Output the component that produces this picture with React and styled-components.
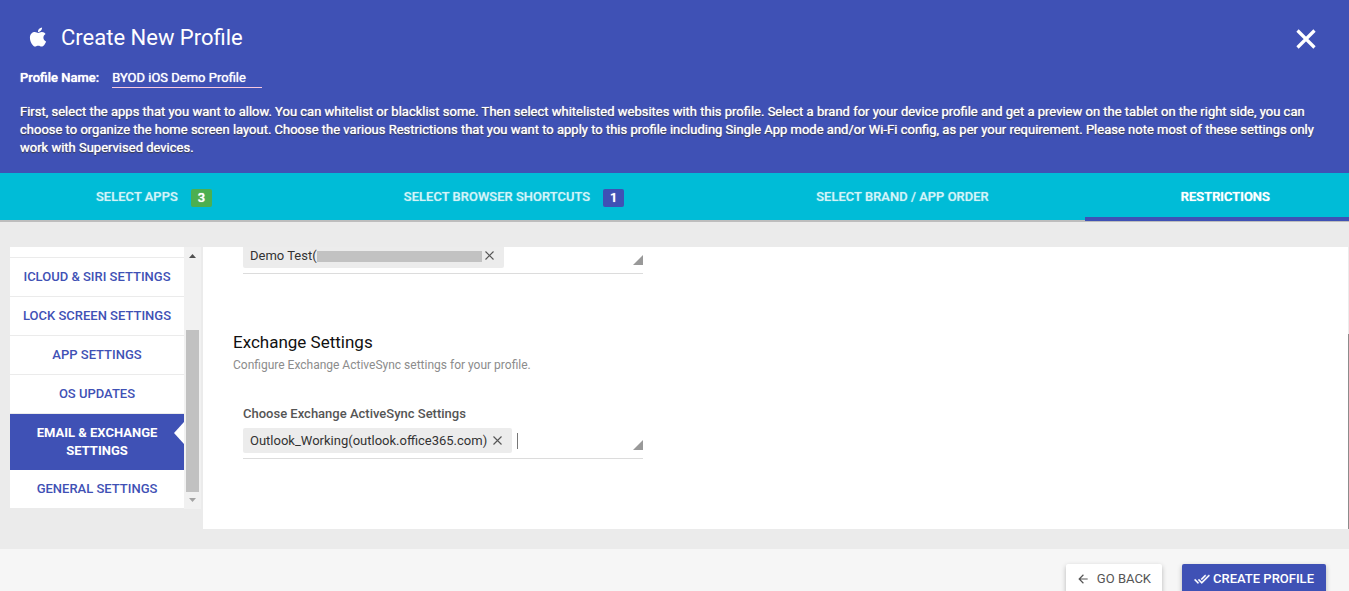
import React from "react";
import styled, { createGlobalStyle, css } from "styled-components";
import { FaApple } from "react-icons/fa";
import { MdArrowBack } from "react-icons/md";

const indigo = "#3f51b5";
const cyan = "#00bcd7";
const panelGrey = "#ebebeb";

const GlobalStyle = createGlobalStyle`
  *, *::before, *::after { box-sizing: border-box; }
  body {
    margin: 0;
    font-family: Roboto, "Liberation Sans", sans-serif;
    font-size: 13px;
    line-height: 18px;
    color: #333;
  }
  button, input { font: inherit; color: inherit; margin: 0; padding: 0; border: 0; background: none; outline: 0; }
  button { cursor: pointer; }
`;

const Page = styled.div`
  height: 100vh;
  overflow: hidden;
  background: #f6f6f6;
`;

const Header = styled.header`
  padding: 20px 20px 16px;
  background: ${indigo};
  color: #fff;
`;

const TitleRow = styled.div`
  display: flex;
  align-items: center;
  height: 36px;
  padding: 0 7px;
`;

const AppleMark = styled(FaApple)`
  width: 22px;
  height: 22px;
  margin-bottom: 2px;
`;

const Title = styled.h1`
  flex: 1;
  margin: 0 0 0 12px;
  font-size: 22px;
  line-height: 32px;
  font-weight: 400;
`;

const CloseButton = styled.button`
  display: flex;
  margin-top: 2px;
`;

const NameRow = styled.div`
  display: flex;
  align-items: center;
  gap: 13px;
  height: 20px;
  margin: 12px 0 15px;
`;

const NameLabel = styled.label`
  font-weight: 500;
  text-shadow: 0 0 1px currentColor;
`;

const NameInput = styled.input`
  width: 150px;
  height: 20px;
  border-bottom: 1px solid #f8c8de;
  font-weight: 400;
  text-shadow: 0 0 1px currentColor;
`;

const Intro = styled.p`
  margin: 0;
  font-weight: 400;
  text-shadow: 0 0 1px currentColor, 0 1px 1px #222;
`;

const Tabs = styled.nav`
  display: flex;
  height: 49px;
  overflow-x: clip;
  background: ${cyan};
  border-bottom: 2px solid #bdbdbd;
`;

const Tab = styled.button`
  position: relative;
  display: flex;
  flex: 1 0 auto;
  align-items: center;
  justify-content: center;
  gap: 13px;
  padding: 0 96px;
  font-weight: 500;
  text-transform: uppercase;
  text-shadow: 0 0 1px currentColor;
  color: ${(p) => (p.$active ? "#fff" : "rgba(255, 255, 255, 0.65)")};
  ${(p) =>
    p.$active &&
    css`
      &::after {
        content: "";
        position: absolute;
        left: 0;
        right: 0;
        bottom: -1px;
        height: 4px;
        background: ${indigo};
      }
    `}
`;

const Badge = styled.span`
  width: 21px;
  height: 18px;
  margin-top: 2px;
  border-radius: 2px;
  background: ${(p) => p.$color};
  color: #fff;
  font-weight: 500;
`;

const Body = styled.main`
  display: flex;
  align-items: flex-start;
  gap: 2px;
  padding: 25px 0 20px 10px;
  background: ${panelGrey};
`;

const Sidebar = styled.aside`
  display: flex;
  flex: none;
  width: 191px;
  height: 262px;
`;

const Menu = styled.ul`
  flex: 1;
  align-self: flex-start;
  margin: 0;
  padding: 10px 0 0;
  list-style: none;
  background: #fff;
`;

const MenuItem = styled.li`
  border-top: ${(p) => (p.$joined ? "0" : `1px solid ${panelGrey}`)};
`;

const MenuLink = styled.a`
  position: relative;
  display: block;
  padding: 10px;
  text-align: center;
  text-decoration: none;
  text-transform: uppercase;
  font-weight: ${(p) => (p.$active ? 700 : 500)};
  color: ${(p) => (p.$active ? "#fff" : indigo)};
  background: ${(p) => (p.$active ? indigo : "#fff")};
  ${(p) =>
    p.$active &&
    css`
      &::after {
        content: "";
        position: absolute;
        top: 8px;
        right: 0;
        border: solid transparent;
        border-width: 11px 10px 11px 0;
        border-right-color: #fff;
      }
    `}
`;

const ScrollTrack = styled.div`
  display: flex;
  flex-direction: column;
  justify-content: space-between;
  align-items: center;
  width: 17px;
  background: #f1f1f1;
`;

const ScrollArrow = styled.svg`
  display: block;
  width: 17px;
  height: 17px;
  fill: ${(p) => p.$color};
`;

const ScrollThumb = styled.div`
  width: 13px;
  height: 162px;
  margin-top: auto;
  background: #c1c1c1;
`;

const Pane = styled.section`
  display: flex;
  flex: 1;
  flex-direction: column;
  justify-content: flex-end;
  height: calc(100vh - 309px);
  min-width: 0;
  overflow: hidden;
  padding: 0 30px 70px;
  background: #fff;
`;

const PaneScroll = styled.div`
  display: flex;
  flex-direction: column;
  justify-content: flex-end;
  align-self: stretch;
  width: 1px;
  margin-left: -2px;
  background: ${panelGrey};
`;

const PaneThumb = styled.div`
  height: 69%;
  background: #8c8c8c;
`;

const SectionTitle = styled.h2`
  margin: 58px 0 0;
  font-size: 17px;
  line-height: 20px;
  font-weight: 400;
  color: #111;
`;

const SectionHint = styled.p`
  margin: 4px 0 31px;
  font-size: 12px;
  line-height: 18px;
  color: #8c8c8c;
`;

const FieldLabel = styled.label`
  margin: 0 10px 5px;
  font-weight: 500;
  color: #555;
`;

const ChipField = styled.div`
  display: flex;
  align-items: center;
  width: 400px;
  height: 31px;
  margin: 0 10px;
  padding-bottom: 5px;
  border-bottom: 1px solid #dcdcdc;
`;

const Chip = styled.span`
  display: flex;
  align-items: center;
  height: 25px;
  padding: 0 10px 0 7px;
  border-radius: 2px;
  background: #ececec;
`;

const Redacted = styled.span`
  width: 165px;
  height: 11px;
  margin-top: 2px;
  background: #c2c2c2;
`;

const ChipRemove = styled.button`
  display: flex;
  margin-left: ${(p) => p.$gap}px;
  color: #555;
`;

const ChipInput = styled.input`
  flex: 1;
  min-width: 0;
  height: 16px;
  margin-left: 5px;
  border-left: ${(p) => (p.$caret ? "1px solid #777" : "0")};
`;

const DropCorner = styled.button`
  align-self: flex-end;
  width: 10px;
  height: 10px;
  margin-bottom: 3px;
  background: #999;
  clip-path: polygon(100% 0, 100% 100%, 0 100%);
`;

const Footer = styled.footer`
  display: flex;
  justify-content: flex-end;
  gap: 20px;
  padding: 15px 23px;
`;

const ActionButton = styled.button`
  display: flex;
  align-items: center;
  gap: ${(p) => (p.$primary ? 3 : 7)}px;
  height: 30px;
  padding: 0 ${(p) => (p.$primary ? 12 : 11)}px 0 ${(p) => (p.$primary ? 12 : 10)}px;
  border-radius: 2px;
  text-transform: uppercase;
  font-weight: ${(p) => (p.$primary ? 500 : 400)};
  color: ${(p) => (p.$primary ? "#fff" : "#555")};
  background: ${(p) => (p.$primary ? indigo : "#fff")};
  box-shadow: 0 2px 5px rgba(0, 0, 0, 0.26);
`;

const tabs = [
  { label: "Select Apps", count: 3, color: "#4caf50" },
  { label: "Select Browser Shortcuts", count: 1, color: indigo },
  { label: "Select Brand / App Order" },
  { label: "Restrictions", active: true },
];

const menu = [
  "iCloud & Siri Settings",
  "Lock Screen Settings",
  "App Settings",
  "OS Updates",
  "Email & Exchange Settings",
  "General Settings",
];
const activeMenu = 4;

function RemoveIcon() {
  return (
    <svg width="9" height="9" viewBox="0 0 9 9" fill="none" stroke="currentColor" strokeWidth="1.1">
      <path d="M0.5 0.5 8.5 8.5M8.5 0.5 0.5 8.5" />
    </svg>
  );
}

function CloseIcon() {
  return (
    <svg width="32" height="32" viewBox="0 0 32 32" fill="none" stroke="currentColor" strokeWidth="3.2">
      <path d="M7.500 7.500 24.500 24.500M24.500 7.500 7.500 24.500" />
    </svg>
  );
}

function DoneAllIcon() {
  return (
    <svg width="16" height="16" viewBox="0 0 24 24" fill="currentColor" stroke="currentColor" strokeWidth="0.5">
      <path d="M18 7l-1.410-1.410-6.340 6.340 1.410 1.410L18 7zm4.240-1.410L11.660 16.170 7.480 12l-1.410 1.410L11.660 19l12-12-1.420-1.410zM.41 13.410L6 19l1.410-1.410L1.830 12 .41 13.410z" />
    </svg>
  );
}

export default function App() {
  return (
    <Page>
      <GlobalStyle />
      <Header>
        <TitleRow>
          <AppleMark />
          <Title>Create New Profile</Title>
          <CloseButton aria-label="Close">
            <CloseIcon />
          </CloseButton>
        </TitleRow>
        <NameRow>
          <NameLabel htmlFor="profile-name">Profile Name:</NameLabel>
          <NameInput id="profile-name" defaultValue="BYOD iOS Demo Profile" />
        </NameRow>
        <Intro>
          First, select the apps that you want to allow. You can whitelist or blacklist some. Then select whitelisted
          websites with this profile. Select a brand for your device profile and get a preview on the tablet on the
          right side, you can choose to organize the home screen layout. Choose the various Restrictions that you want
          to apply to this profile including Single App mode and/or Wi-Fi config, as per your requirement. Please note
          most of these settings only work with Supervised devices.
        </Intro>
      </Header>

      <Tabs>
        {tabs.map((t) => (
          <Tab key={t.label} $active={t.active}>
            {t.label}
            {t.count && <Badge $color={t.color}>{t.count}</Badge>}
          </Tab>
        ))}
      </Tabs>

      <Body>
        <Sidebar>
          <Menu>
            {menu.map((label, i) => (
              <MenuItem key={label} $joined={i > activeMenu}>
                <MenuLink href="#" $active={i === activeMenu}>
                  {label}
                </MenuLink>
              </MenuItem>
            ))}
          </Menu>
          <ScrollTrack aria-hidden="true">
            <ScrollArrow $color="#505050" viewBox="0 0 17 17">
              <path d="M5 11 8.500 7 12 11Z" />
            </ScrollArrow>
            <ScrollThumb />
            <ScrollArrow $color="#a3a3a3" viewBox="0 0 17 17">
              <path d="M5 6 8.500 10 12 6Z" />
            </ScrollArrow>
          </ScrollTrack>
        </Sidebar>

        <Pane>
          <ChipField>
            <Chip>
              Demo Test(
              <Redacted />
              <ChipRemove $gap={3} aria-label="Remove Demo Test">
                <RemoveIcon />
              </ChipRemove>
            </Chip>
            <ChipInput aria-label="Email settings" />
            <DropCorner aria-label="Open list" />
          </ChipField>

          <SectionTitle>Exchange Settings</SectionTitle>
          <SectionHint>Configure Exchange ActiveSync settings for your profile.</SectionHint>

          <FieldLabel htmlFor="exchange">Choose Exchange ActiveSync Settings</FieldLabel>
          <ChipField>
            <Chip>
              Outlook_Working(outlook.office365.com)
              <ChipRemove $gap={6} aria-label="Remove Outlook_Working">
                <RemoveIcon />
              </ChipRemove>
            </Chip>
            <ChipInput id="exchange" $caret />
            <DropCorner aria-label="Open list" />
          </ChipField>
        </Pane>
        <PaneScroll aria-hidden="true">
          <PaneThumb />
        </PaneScroll>
      </Body>

      <Footer>
        <ActionButton>
          <MdArrowBack size={14} />
          Go Back
        </ActionButton>
        <ActionButton $primary>
          <DoneAllIcon />
          Create Profile
        </ActionButton>
      </Footer>
    </Page>
  );
}
